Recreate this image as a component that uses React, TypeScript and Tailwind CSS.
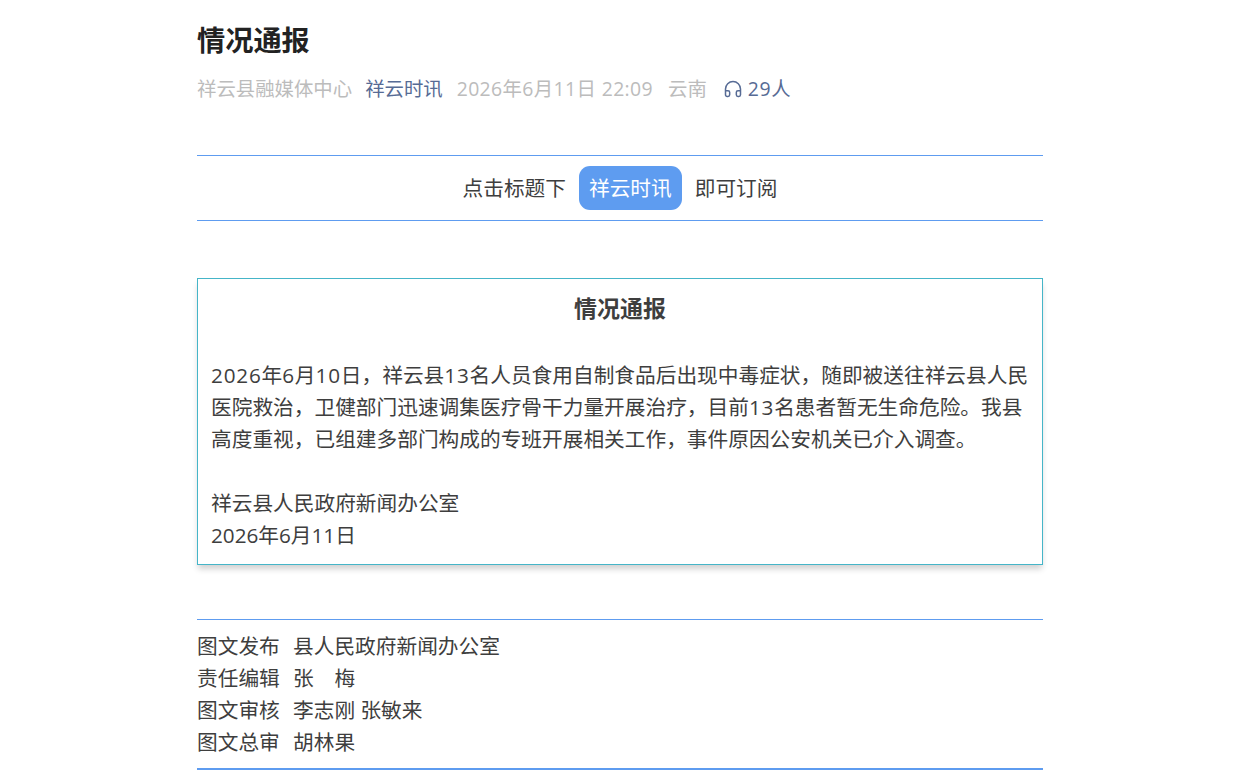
// 情况通报 article page
import { Headphones } from 'lucide-react';

const FONT = "font-['Open_Sans','Noto_Sans_CJK_SC',sans-serif]";

const CREDITS = [
  { label: '图文发布', value: '县人民政府新闻办公室' },
  { label: '责任编辑', value: '张\u3000梅' },
  { label: '图文审核', value: '李志刚 张敏来' },
  { label: '图文总审', value: '胡林果' },
];

// digits in the body copy run a little wider than the font's own
function Num({ children }: { children: string }) {
  return <span className="tracking-[0.8px]">{children}</span>;
}

export default function App() {
  return (
    <div className={`${FONT} h-[784px] overflow-hidden bg-white pl-[3px] text-[20.7px] leading-[32px] text-[#3e3e3e]`}>
      <div className="mx-auto w-[846px]">
        <h1 className="pt-[20px] text-[28.2px] leading-[40px] font-bold text-[#222222]">情况通报</h1>

        <div className="mt-[13px] flex h-[32px] items-center text-[19.4px] text-[#bcbcbc]">
          <span>祥云县融媒体中心</span>
          <span className="ml-[13px] text-[#576b95]">祥云时讯</span>
          <span className="ml-[14px] tracking-[0.38px]">2026年6月11日 22:09</span>
          <span className="ml-[15px]">云南</span>
          <span className="ml-[16px] flex items-center text-[#576b95]">
            <Headphones size={20} strokeWidth={1.8} className="mr-[5px] -mt-[1px]" />
            <span className="tracking-[0.6px]">29人</span>
          </span>
        </div>

        <div className="mt-[50px] flex h-[66px] items-center justify-center border-y border-[#5e9cf0]">
          <span>点击标题下</span>
          <span className="mx-[13px] flex h-[44px] items-center rounded-[11px] bg-[#5e9cf0] px-[10px] text-white">祥云时讯</span>
          <span>即可订阅</span>
        </div>

        <div className="mt-[57px] border border-[#45b5c8] px-[13px] pt-[13px] pb-[13px] shadow-[0_5px_6px_-1px_rgba(0,0,0,0.18)]">
          <h2 className="text-center text-[23px] leading-[32px] font-bold">情况通报</h2>
          <p className="mt-[35px]">
            <Num>2026</Num>年<Num>6</Num>月<Num>10</Num>日，祥云县<Num>13</Num>名人员食用自制食品后出现中毒症状，随即被送往祥云县人民医院救治，卫健部门迅速调集医疗骨干力量开展治疗，目前<Num>13</Num>名患者暂无生命危险。我县高度重视，已组建多部门构成的专班开展相关工作，事件原因公安机关已介入调查。
          </p>
          <p className="mt-[32px]">祥云县人民政府新闻办公室</p>
          <p>2026年6月11日</p>
        </div>

        <div className="mt-[54px] border-t border-[#5e9cf0] pt-[10px] pb-[10px]">
          {CREDITS.map((c) => (
            <div key={c.label} className="flex">
              <span className="w-[96px]">{c.label}</span>
              <span>{c.value}</span>
            </div>
          ))}
        </div>
        <div className="h-[2px] bg-[#5e9cf0]" />
      </div>
    </div>
  );
}
